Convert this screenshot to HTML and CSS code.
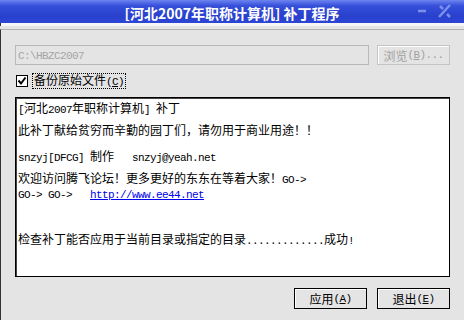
FILE: index.html
```html
<!DOCTYPE html>
<html lang="zh-CN">

<head>
	<meta charset="utf-8">
	<title>[河北2007年职称计算机] 补丁程序</title>
	<link rel="stylesheet" href="styles.css">
</head>

<body>
	<div id="window">
		<div class="titlebar">
			<span class="title">[河北2007年职称计算机] 补丁程序</span>
			<svg class="controls" width="40" height="23" viewBox="0 0 40 23">
				<path d="M2 11h8" stroke="#7c90ea" stroke-width="2.5" />
				<path d="M23 17L34 5M24 6l3 3M31 14l3 3" stroke="#7c90ea" stroke-width="2.5" fill="none" />
			</svg>
		</div>
		<div class="edge"></div>
		<div class="main">
			<div class="path-row">
				<div class="path-input"><span class="en">C:\HBZC2007</span></div>
				<div class="btn disabled">浏览<span class="en">(<u>B</u>)...</span></div>
			</div>
			<div class="backup">
				<span class="check">
					<svg width="10" height="10" viewBox="0 0 10 10">
						<path d="M1.5 4.5L4 7.5L8.5 1.5" stroke="#000" stroke-width="2" fill="none" />
					</svg>
				</span>
				<span class="focus">备份原始文件<span class="en">(<u>C</u>)</span></span>
			</div>
			<div class="log">
				<p><span class="en">[</span>河北<span class="en">2007</span>年职称计算机<span class="en">] </span>补丁</p>
				<p class="gap-a">此补丁献给贫穷而辛勤的园丁们，请勿用于商业用途！！</p>
				<p class="gap-b"><span class="en">snzyj[DFCG] </span>制作<span class="en">   snzyj@yeah.net</span></p>
				<p class="gap-a">欢迎访问腾飞论坛！更多更好的东东在等着大家！<span class="en">GO-></span></p>
				<p><span class="en">GO-> GO->   <a class="link" href="#">http://www.ee44.net</a></span></p>
				<p class="gap-c">检查补丁能否应用于当前目录或指定的目录<span class="en">.............</span>成功<span class="en">!</span></p>
			</div>
			<div class="actions">
				<div class="btn">应用<span class="en">(<u>A</u>)</span></div>
				<div class="btn">退出<span class="en">(<u>E</u>)</span></div>
			</div>
		</div>
	</div>
</body>

</html>
```

FILE: styles.css
```css
body {
	margin: 0;
	font-family: "Noto Sans CJK SC", sans-serif;
	font-size: 12px;
}

#window {
	width: 464px;
	height: 320px;
	background: #e4e4e4;
	overflow: hidden;
}

.titlebar {
	position: relative;
	height: 23px;
	box-sizing: border-box;
	padding-top: 3px;
	text-align: center;
	background: linear-gradient(#6d84f0, #3650da 25%, #2840cc 70%, #2d46d4);
}

.title {
	color: #fff;
	font-weight: bold;
	font-size: 14px;
	line-height: 20px;
}

.controls {
	position: absolute;
	top: 0;
	right: 8px;
}

.edge {
	height: 3px;
	margin-bottom: 3px;
	background: #f6f6f6;
	border-left: 1px solid #333;
}

.main {
	height: 291px;
	border-top: 1px solid #b0b0b0;
	border-left: 1px solid #333;
	padding: 15px 14px 0 14px;
}

.en {
	font-family: "Liberation Mono", monospace;
	font-size: 11px;
	letter-spacing: -0.6px;
	white-space: pre;
}

.path-row {
	display: flex;
	gap: 8px;
	height: 20px;
}

.path-input {
	width: 354px;
	box-sizing: border-box;
	border: 1px solid #b8b8b8;
	padding-left: 2px;
	line-height: 16px;
	color: #a4a4a4;
}

.btn {
	width: 73px;
	height: 21px;
	box-sizing: border-box;
	display: flex;
	align-items: center;
	justify-content: center;
	border: 1px solid #000;
	box-shadow: inset 1px 1px 0 #fff;
	color: #000;
}

.btn.disabled {
	height: 20px;
	border-color: #c4c4c4;
	color: #a0a0a0;
}

.backup {
	display: flex;
	align-items: center;
	gap: 5px;
	margin-top: 9px;
	height: 13px;
	padding-left: 1px;
}

.check {
	width: 12px;
	height: 12px;
	box-sizing: border-box;
	border: 1px solid #000;
	background: #fff;
	display: flex;
	align-items: center;
	justify-content: center;
}

.focus {
	outline: 1px dotted #000;
	padding: 0 1px;
	line-height: 12px;
}

.log {
	margin-top: 10px;
	height: 180px;
	box-sizing: border-box;
	border: 1px solid #000;
	box-shadow: inset 1px 1px 0 #444;
	background: #fff;
	padding: 2px 2px;
}

.log p {
	margin: 0;
	height: 15px;
	line-height: 15px;
	white-space: pre;
}

.log .gap-a {
	margin-top: 7px;
}

.log .gap-b {
	margin-top: 11px;
}

.log .gap-c {
	margin-top: 31px;
}

.link {
	color: #0000ee;
}

.actions {
	display: flex;
	justify-content: flex-end;
	gap: 10px;
	margin-top: 11px;
}
```
